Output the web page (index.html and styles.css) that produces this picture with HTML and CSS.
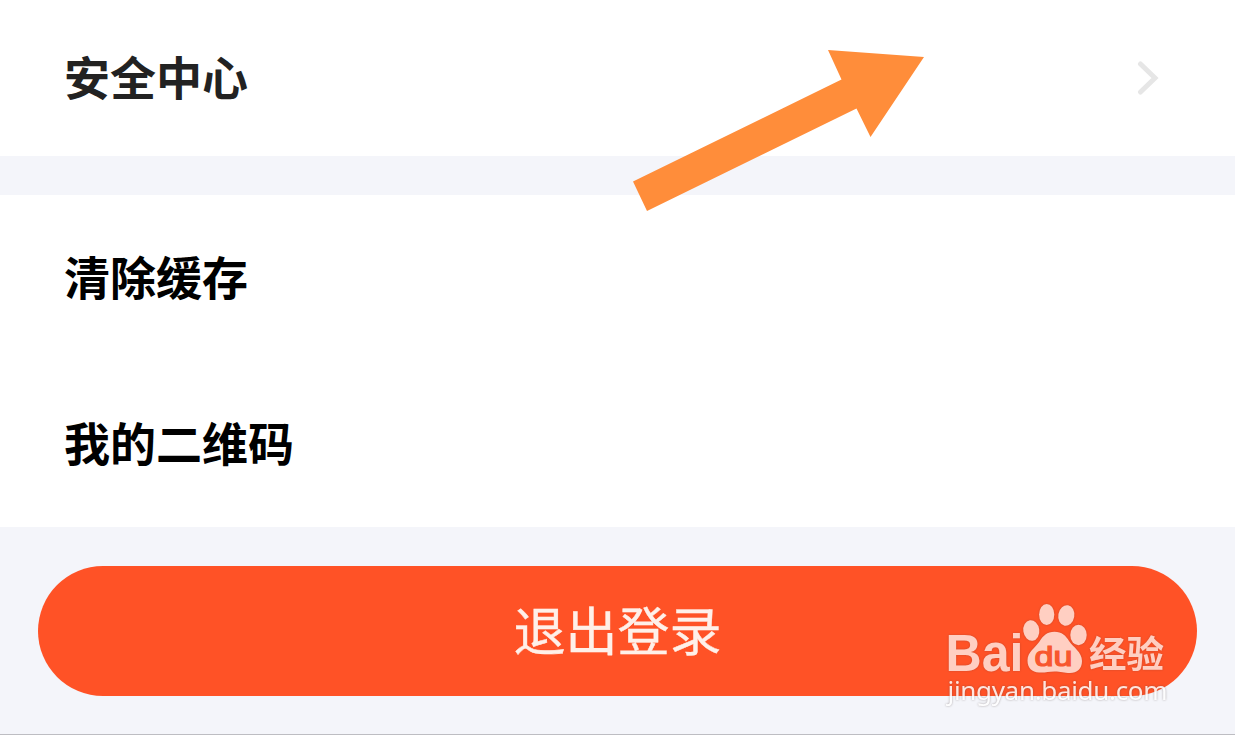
FILE: index.html
```html
<!DOCTYPE html>
<html lang="zh-CN">
<head>
<meta charset="utf-8">
<title>设置</title>
<link rel="stylesheet" href="styles.css">
</head>
<body>
<main class="page">
  <section class="group group-security">
    <div class="row row-security">
      <span class="label">安全中心</span>
      <svg class="chevron" width="24" height="36" viewBox="0 0 24 36"><path d="M3.500 4 L18 18 L3.500 32"/></svg>
    </div>
  </section>
  <section class="group group-more">
    <div class="row"><span class="label">清除缓存</span></div>
    <div class="row"><span class="label">我的二维码</span></div>
  </section>
  <footer class="footer">
    <button class="logout">退出登录</button>
  </footer>
  <svg class="arrow" width="300" height="170" viewBox="630 45 300 170">
    <path d="M633 181.500 L841.500 79.500 L828 50 L924 57 L870.500 137 L856.500 108.500 L647 211 Z"/>
  </svg>
  <svg class="watermark" width="250" height="125" viewBox="935 590 250 125">
    <g class="mark">
      <text class="bai" x="945.500" y="671" textLength="78" lengthAdjust="spacingAndGlyphs">Bai</text>
      <ellipse cx="1031.300" cy="630.500" rx="8" ry="10.300" transform="rotate(-8 1031.300 630.500)"/>
      <ellipse cx="1046.700" cy="614.500" rx="7.600" ry="10.600"/>
      <ellipse cx="1066.300" cy="615.500" rx="8" ry="10.300" transform="rotate(10 1066.300 615.500)"/>
      <ellipse cx="1078.500" cy="635" rx="8.200" ry="10.200"/>
      <path d="M1054.500 631.800 C1062 631.800 1066 636 1069 641 C1073 647 1082 652 1082 661 C1082 669 1077 673 1070 673 C1064 673 1061 671.500 1054.500 671.500 C1048 671.500 1045 673 1039 672.500 C1032 672 1027.500 668 1027.500 660.500 C1027.500 652 1035 648 1039.500 641.500 C1043 636 1047 631.800 1054.500 631.800 Z"/>
      <text class="jy" x="1089" y="668" textLength="75" lengthAdjust="spacingAndGlyphs">经验</text>
    </g>
    <text class="url" x="947.500" y="700" textLength="220" lengthAdjust="spacing">jingyan.baidu.com</text>
    <text class="du" x="1034.500" y="666" textLength="38" lengthAdjust="spacingAndGlyphs">du</text>
  </svg>
</main>
</body>
</html>
```
FILE: styles.css
```css
* { box-sizing: border-box; }
body { margin: 0; background: #f4f5fa; font-family: "Noto Sans CJK SC", sans-serif; }
.page { position: relative; width: 1235px; height: 735px; overflow: hidden; border-bottom: 1px solid #bdbdc2; display: flex; flex-direction: column; }
.group { background: #fff; }
.group-security { height: 156px; margin-bottom: 39px; }
.group-more { height: 332px; }
.row { height: 166px; padding: 0 74px 0 64px; display: flex; align-items: center; justify-content: space-between; }
.row-security { height: 156px; }
.label { padding-bottom: 7px; font-size: 46px; font-weight: 700; line-height: 66px; color: #000; }
.row-security .label { color: #222; }
.chevron { fill: none; stroke: #e6e6e6; stroke-width: 5; stroke-linecap: round; stroke-linejoin: miter; }
.footer { flex: 1; padding: 39px 38px 0 38px; }
.logout { display: flex; align-items: center; justify-content: center; width: 100%; height: 130px; margin: 0; padding: 0 0 4px; border: 0; border-radius: 65px; background: #ff5226; color: #fff0e9; font: 400 52px/76px "Noto Sans CJK SC", sans-serif; -webkit-text-stroke: .4px #fff0e9; }
.arrow { position: absolute; left: 630px; top: 45px; fill: #ff8d3a; }
.watermark { position: absolute; left: 935px; top: 590px; }
.mark { fill: #fff; opacity: .72; filter: drop-shadow(0 0 1px rgba(80, 50, 50, .4)); }
.bai { font: 700 51px "Liberation Sans", sans-serif; }
.jy { font: 700 37px "Noto Sans CJK SC", sans-serif; }
.url { font: 400 26px "Noto Sans", sans-serif; fill: #fff; opacity: .85; filter: drop-shadow(0 0 1px rgba(80, 60, 60, .5)); }
.du { font: 400 27px "Liberation Sans", sans-serif; fill: #f8572f; stroke: #f8572f; stroke-width: 1.2px; }
```
